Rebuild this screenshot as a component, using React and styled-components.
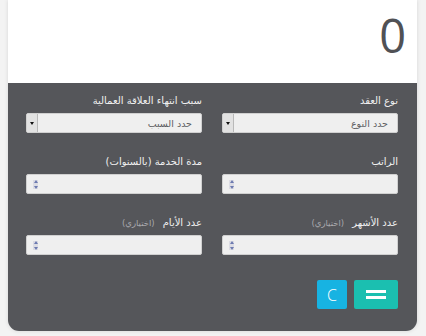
import React from "react";
import styled, { createGlobalStyle } from "styled-components";

const GlobalStyle = createGlobalStyle`
  html, body {
    margin: 0;
    padding: 0;
    background: #f3f3f3;
    font-family: "DejaVu Sans", "Noto Sans", sans-serif;
  }
`;

const Page = styled.div`
  width: 426px;
  height: 336px;
  padding: 0 9px 0 8px;
  box-sizing: border-box;
`;

const Card = styled.div`
  width: 409px;
  border-radius: 0 0 11px 11px;
  box-shadow: 0 0 4px rgba(0, 0, 0, 0.12);
`;

const Screen = styled.div`
  height: 83px;
  background: #ffffff;
  display: flex;
  justify-content: flex-end;
  align-items: center;
  padding: 0 11px 0 0;
  box-sizing: border-box;
  font-family: "Open Sans", "Liberation Sans", sans-serif;
  font-size: 47px;
  font-weight: 400;
  color: #505155;
`;

const Display = styled.span`
  line-height: 64px;
  margin-top: -14px;
`;

const Panel = styled.div`
  background: #55565a;
  height: 248px;
  padding: 12px 19px 0 18px;
  box-sizing: border-box;
  border-radius: 0 0 11px 11px;
  direction: rtl;
`;

const Grid = styled.div`
  display: grid;
  grid-template-columns: 176px 176px;
  column-gap: 20px;
  row-gap: 23px;
`;

const Field = styled.div`
  display: flex;
  flex-direction: column;
  gap: 6px;
`;

const Label = styled.label`
  font-size: 10px;
  line-height: 12px;
  color: #f0f0f0;
  height: 12px;
  white-space: nowrap;
`;

const Hint = styled.span`
  font-size: 8.5px;
  color: #a9a9ad;
  margin-right: 8px;
`;

const SelectBox = styled.div`
  height: 20px;
  background: #efefef;
  border: 1px solid #d0d0d0;
  border-radius: 2px;
  box-sizing: border-box;
  display: flex;
  align-items: center;
`;

const SelectText = styled.span`
  flex: 1;
  font-size: 9.5px;
  color: #5d5e62;
  padding-right: 9px;
`;

const Arrow = styled.span`
  width: 10px;
  height: 18px;
  background: #e2e2e2;
  border-right: 1px solid #b9b9b9;
  display: flex;
  align-items: center;
  justify-content: center;
  &::after {
    content: "";
    border-left: 2.5px solid transparent;
    border-right: 2.5px solid transparent;
    border-top: 3px solid #111;
  }
`;

const NumberBox = styled.div`
  height: 20px;
  background: #efefef;
  border: 1px solid #d0d0d0;
  border-radius: 2px;
  box-sizing: border-box;
  display: flex;
  align-items: center;
  justify-content: flex-end;
  padding-left: 6px;
`;

const Spinner = styled.span`
  width: 5px;
  height: 9px;
  display: flex;
  flex-direction: column;
  justify-content: space-between;
  align-items: center;
  background: #dcdce4;
  &::before, &::after {
    content: "";
    border-left: 2px solid transparent;
    border-right: 2px solid transparent;
  }
  &::before { border-bottom: 3px solid #6c7ab0; }
  &::after { border-top: 3px solid #6c7ab0; }
`;

const Actions = styled.div`
  display: flex;
  gap: 7px;
  margin-top: 25px;
`;

const Button = styled.button`
  height: 29px;
  width: ${(p) => p.$w}px;
  border: none;
  border-radius: 2px;
  background: ${(p) => p.$bg};
  color: #ffffff;
  font-family: "Open Sans", "Liberation Sans", sans-serif;
  font-size: 16px;
  font-weight: 300;
  display: flex;
  align-items: center;
  justify-content: center;
  padding: 0;
`;

const Equals = styled.span`
  width: 20px;
  height: 9px;
  border-top: 3px solid #fff;
  border-bottom: 3px solid #fff;
  box-sizing: border-box;
`;

function Select({ label, value }) {
  return (
    <Field>
      <Label>{label}</Label>
      <SelectBox>
        <SelectText>{value}</SelectText>
        <Arrow />
      </SelectBox>
    </Field>
  );
}

function NumberField({ label, optional }) {
  return (
    <Field>
      <Label>
        {label}
        {optional && <Hint>(اختياري)</Hint>}
      </Label>
      <NumberBox>
        <Spinner />
      </NumberBox>
    </Field>
  );
}

export default function App() {
  return (
    <>
      <GlobalStyle />
      <Page>
        <Card>
          <Screen>
            <Display>0</Display>
          </Screen>
          <Panel>
            <Grid>
              <Select label="نوع العقد" value="حدد النوع" />
              <Select label="سبب انتهاء العلاقة العمالية" value="حدد السبب" />
              <NumberField label="الراتب" />
              <NumberField label="مدة الخدمة (بالسنوات)" />
              <NumberField label="عدد الأشهر" optional />
              <NumberField label="عدد الأيام" optional />
            </Grid>
            <Actions>
              <Button $w={44} $bg="#1bbfb0">
                <Equals />
              </Button>
              <Button $w={30} $bg="#17b3e2">C</Button>
            </Actions>
          </Panel>
        </Card>
      </Page>
    </>
  );
}
